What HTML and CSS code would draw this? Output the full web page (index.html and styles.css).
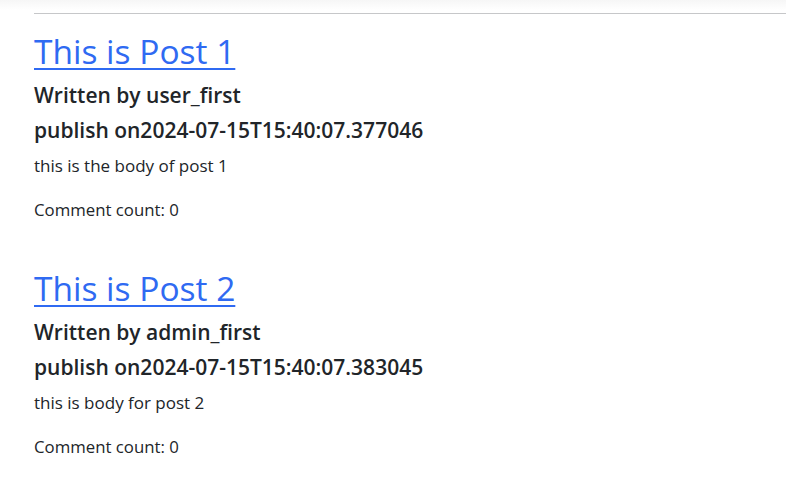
FILE: index.html
```html
<!DOCTYPE html>
<html lang="en">
<head>
<meta charset="utf-8">
<title>Posts</title>
<link rel="stylesheet" href="styles.css">
</head>
<body>
<div class="topbar"></div>
<main class="container">
  <hr class="rule">
  <article class="post">
    <h1 class="post-title"><a href="#">This is Post 1</a></h1>
    <h4 class="post-meta">Written by user_first</h4>
    <h4 class="post-meta">publish on2024-07-15T15:40:07.377046</h4>
    <p class="post-body">this is the body of post 1</p>
    <p class="post-count">Comment count: 0</p>
  </article>
  <article class="post">
    <h1 class="post-title"><a href="#">This is Post 2</a></h1>
    <h4 class="post-meta">Written by admin_first</h4>
    <h4 class="post-meta">publish on2024-07-15T15:40:07.383045</h4>
    <p class="post-body">this is body for post 2</p>
    <p class="post-count">Comment count: 0</p>
  </article>
</main>
</body>
</html>
```

FILE: styles.css
```css
html, body {
  margin: 0;
  padding: 0;
}
body {
  font-family: "Open Sans", "Noto Sans", sans-serif;
  color: #212529;
  background: #fff;
}
.topbar {
  height: 10px;
  background: linear-gradient(#f6f6f6, #fff);
}
.container {
  padding: 0 0 0 34px;
}
.rule {
  margin: 3px 0 0 0;
  border: 0;
  border-top: 1px solid #c6c7c9;
  height: 0;
}
.post {
  display: flex;
  flex-direction: column;
  align-items: flex-start;
}
.post-title {
  margin: 17px 0 7px 0;
  font-size: 33.5px;
  font-weight: 500;
  line-height: 40px;
}
.post + .post .post-title {
  margin-top: 41px;
}
.post-title a {
  color: #2f6af2;
  text-decoration: underline;
  text-decoration-thickness: 2px;
  text-underline-offset: 4px;
}
.post-meta {
  margin: 0;
  font-size: 21px;
  font-weight: 600;
  line-height: 35px;
}
.post-body {
  margin: 1px 0 0 0;
  font-size: 17px;
  line-height: 34px;
}
.post-count {
  margin: 10px 0 0 0;
  font-size: 16.8px;
  line-height: 34px;
}
```
